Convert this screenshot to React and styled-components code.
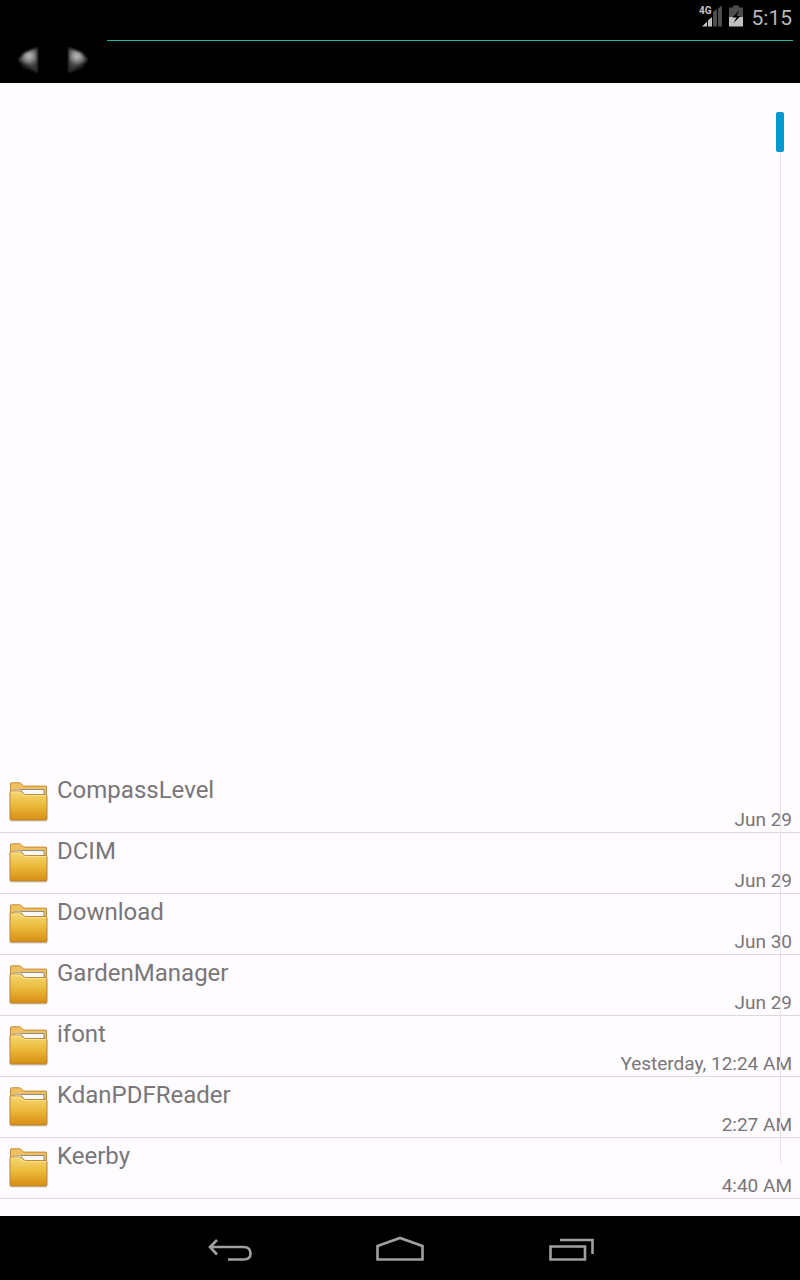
import React from "react";
import styled, { createGlobalStyle } from "styled-components";

const GlobalStyle = createGlobalStyle`
  *, *::before, *::after { box-sizing: border-box; }
  body {
    margin: 0;
    background: #000;
    font-family: Roboto, "Liberation Sans", sans-serif;
  }
`;

const Screen = styled.div`
  display: flex;
  flex-direction: column;
  min-height: 100vh;
  background: #fffcff;
`;

const StatusBar = styled.header`
  display: flex;
  justify-content: flex-end;
  align-items: flex-start;
  height: 36px;
  padding: 0 8px;
  background: #000;
  color: #b8b8b8;
`;

const StatusIcon = styled.svg`
  width: ${(p) => p.$width}px;
  height: 22px;
  margin-top: 5px;
  margin-right: ${(p) => p.$gap}px;
`;

const Clock = styled.time`
  font-size: 21px;
  line-height: 36px;
`;

const Toolbar = styled.div`
  display: flex;
  align-items: flex-start;
  height: 47px;
  padding: 0 7px 0 5px;
  background: #000;
`;

const HistoryButton = styled.button`
  display: flex;
  align-items: center;
  justify-content: center;
  width: 48px;
  height: 48px;
  padding: 0;
  border: 0;
  background: none;
`;

const PathInput = styled.input`
  flex: 1;
  min-width: 0;
  height: 5px;
  margin-left: 6px;
  padding: 0;
  border: 0;
  border-bottom: 1px solid #21b5a8;
  outline: none;
  background: transparent;
  color: #fff;
  font: inherit;
`;

const Content = styled.main`
  position: relative;
  flex: 1;
  display: flex;
  flex-direction: column;
  justify-content: flex-end;
  padding-bottom: 17px;
`;

const FileList = styled.ul`
  margin: 0;
  padding: 0;
  list-style: none;
`;

const FileRow = styled.li`
  display: flex;
  height: 61px;
  padding: 0 8px;
  border-bottom: 1px solid #dcd9dc;
  color: #787678;
`;

const FolderIcon = styled.svg`
  flex: none;
  width: 41px;
  height: 42px;
  margin-top: 8px;
`;

const FileName = styled.span`
  flex: 1;
  padding-left: 8px;
  font-size: 24px;
  line-height: 36px;
`;

const FileDate = styled.time`
  align-self: flex-end;
  font-size: 19px;
  line-height: 24px;
`;

const ScrollTrack = styled.div`
  position: absolute;
  top: 29px;
  bottom: 53px;
  right: 16px;
  width: 8px;
  display: flex;
  justify-content: center;
  pointer-events: none;

  &::before {
    content: "";
    width: 1px;
    margin-left: 1px;
    background: #e6e1e6;
  }
`;

const ScrollThumb = styled.div`
  position: absolute;
  top: 0;
  left: 0;
  width: 8px;
  height: 40px;
  border-radius: 2px;
  background: #0399cf;
`;

const NavBar = styled.nav`
  display: flex;
  justify-content: center;
  height: 64px;
  background: #000;
`;

const NavButton = styled.button`
  display: flex;
  align-items: center;
  justify-content: center;
  width: 170px;
  padding: 4px 0 0;
  border: 0;
  background: none;
`;

const NavIcon = styled.svg`
  width: 50px;
  height: 28px;
  fill: none;
  stroke: #a0a0a0;
  stroke-width: 2.6;
`;

const files = [
  { name: "CompassLevel", date: "Jun 29" },
  { name: "DCIM", date: "Jun 29" },
  { name: "Download", date: "Jun 30" },
  { name: "GardenManager", date: "Jun 29" },
  { name: "ifont", date: "Yesterday, 12:24 AM" },
  { name: "KdanPDFReader", date: "2:27 AM" },
  { name: "Keerby", date: "4:40 AM" },
];

function Folder() {
  return (
    <FolderIcon viewBox="0 0 41 42" aria-hidden="true">
      <defs>
        <linearGradient id="folderFront" x1="0" y1="0" x2="0" y2="1">
          <stop offset="0" stopColor="#f6d873" />
          <stop offset=".5" stopColor="#ebb93a" />
          <stop offset="1" stopColor="#d68e14" />
        </linearGradient>
      </defs>
      <path d="M2 38.500h37v2q0 1-1 1H3q-1 0-1-1z" fill="#b9b0ae" opacity=".6" />
      <path d="M2.500 12V3.700q0-.9.900-.9h8.100q.6 0 1 .4l3 2.600q.4.300 1 .3H38q.5 0 .5.500V20h-36z" fill="#f0bf5e" stroke="#c08a3c" />
      <path d="M12.500 9.500h23.500V18H12.500z" fill="#f7f8fa" stroke="#8d8c88" />
      <path d="M6 9.500h7L16 15H6z" fill="#f7f8fa" stroke="#a09c90" strokeWidth=".7" />
      <path d="M2 11.800q0-.8.900-.8h9.100q.8 0 1.300.5l3 2.500q.6.500 1.400.5h20.300q1 0 1 1V39q0 1-1 1H3q-1 0-1-1z" fill="url(#folderFront)" stroke="#b98230" />
      <path d="M3 12h8.800l3.400 2.800q.7.600 1.500.6h21.800" fill="none" stroke="#ffe9a0" strokeWidth=".8" />
    </FolderIcon>
  );
}

function ArrowIcon({ forward }) {
  const id = forward ? "glowForward" : "glowBack";
  return (
    <svg width="30" height="34" viewBox="0 0 30 34" aria-hidden="true">
      <defs>
        <radialGradient id={id} gradientUnits="userSpaceOnUse" cx="15" cy="13" r="14">
          <stop offset="0" stopColor="#c0c0c0" />
          <stop offset=".35" stopColor="#8a8a8a" />
          <stop offset=".65" stopColor="#464646" />
          <stop offset="1" stopColor="#2e2e2e" />
        </radialGradient>
        <filter id={id + "Blur"} x="-30%" y="-30%" width="160%" height="160%">
          <feGaussianBlur stdDeviation="1.3" />
        </filter>
      </defs>
      <g transform={forward ? "matrix(-1 0 0 1 30 0)" : undefined}>
        <path d="M4 17L9 9L24 4V30L10 25Z" fill="#242424" filter={`url(#${id}Blur)`} />
        <path d="M5 17L11 10L23 5V29Z" fill={`url(#${id})`} filter={`url(#${id}Blur)`} />
      </g>
    </svg>
  );
}

export default function App() {
  return (
    <>
      <GlobalStyle />
      <Screen>
        <StatusBar>
          <StatusIcon $width={24} $gap={6} viewBox="0 0 24 22" role="img" aria-label="4G signal">
            <path d="M3 21.500L8 16.500V21.500zM9 15.500L13 12V21.500H9z" fill="#c0c0c0" />
            <path d="M14 21.500V7l4-3v17.500zM19 21.500V3.500l4-3v21z" fill="#4d4d4d" />
            <text x="0" y="9" fontFamily="Roboto, sans-serif" fontSize="10" fontWeight="700" fill="#c4c4c4">4G</text>
          </StatusIcon>
          <StatusIcon $width={14} $gap={9} viewBox="0 0 14 22" role="img" aria-label="Battery charging">
            <path d="M4 .5h6v2h4v10H0v-10h4z" fill="#4d4d4d" />
            <path d="M0 12h14v9.500H0z" fill="#c0c0c0" />
            <path d="M10.500 5L3.500 12.500h4L4.500 18L11.500 11H7.500z" fill="#000" />
          </StatusIcon>
          <Clock>5:15</Clock>
        </StatusBar>
        <Toolbar>
          <HistoryButton type="button" aria-label="Back in history"><ArrowIcon /></HistoryButton>
          <HistoryButton type="button" aria-label="Forward in history"><ArrowIcon forward /></HistoryButton>
          <PathInput type="text" aria-label="Path" />
        </Toolbar>
        <Content>
          <FileList>
            {files.map((f) => (
              <FileRow key={f.name}>
                <Folder />
                <FileName>{f.name}</FileName>
                <FileDate>{f.date}</FileDate>
              </FileRow>
            ))}
          </FileList>
          <ScrollTrack>
            <ScrollThumb />
          </ScrollTrack>
        </Content>
        <NavBar>
          <NavButton type="button" aria-label="Back">
            <NavIcon viewBox="0 0 50 28">
              <path d="M12 4L5 11L12 18.500M5.500 11H38.500Q45.500 11 45.500 17.500Q45.500 23.500 38.500 23.500H23" />
            </NavIcon>
          </NavButton>
          <NavButton type="button" aria-label="Home">
            <NavIcon viewBox="0 0 50 28">
              <path d="M2.500 10L25 2L47.500 10V23.500H2.500Z" />
            </NavIcon>
          </NavButton>
          <NavButton type="button" aria-label="Recent apps">
            <NavIcon viewBox="0 0 50 28">
              <path d="M5.500 10.500H40V23.500H5.500ZM15 4H47.500V18" />
            </NavIcon>
          </NavButton>
        </NavBar>
      </Screen>
    </>
  );
}
